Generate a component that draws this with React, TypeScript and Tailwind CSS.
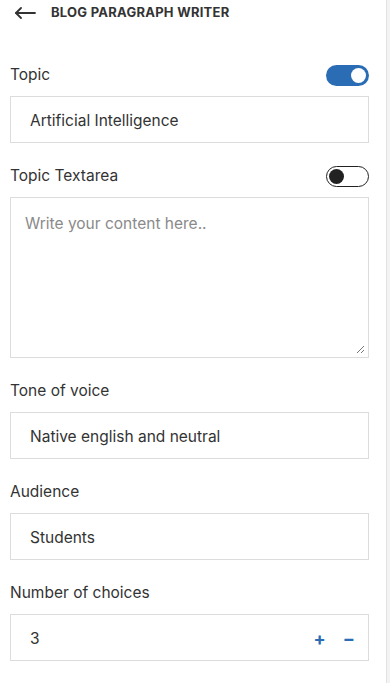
import React from "react";

function Toggle({ on }: { on: boolean }) {
  return on ? (
    <div className="w-[43px] h-[21px] rounded-full bg-[#2a6db5] flex items-center justify-end pr-[3px]">
      <div className="w-[15px] h-[15px] rounded-full bg-white" />
    </div>
  ) : (
    <div className="w-[43px] h-[21px] rounded-full bg-white border-[1.5px] border-[#222] flex items-center justify-start pl-[2px]">
      <div className="w-[15px] h-[15px] rounded-full bg-[#222]" />
    </div>
  );
}

function Label({ text, toggle }: { text: string; toggle?: boolean }) {
  return (
    <div className="flex items-center justify-between h-[22px] mb-[10px]">
      <span className="text-[15.5px] text-[#333]">{text}</span>
      {toggle !== undefined && <Toggle on={toggle} />}
    </div>
  );
}

function Field({ value }: { value: string }) {
  return (
    <div className="h-[47px] border border-[#dcdcdc] bg-white flex items-center px-[19px] pt-[2px] mb-[22px]">
      <span className="text-[15.5px] text-[#333]">{value}</span>
    </div>
  );
}

export default function App() {
  return (
    <div
      className="w-[390px] h-[683px] bg-white flex overflow-hidden"
      style={{ fontFamily: 'Inter, "Liberation Sans", Arial, sans-serif' }}
    >
      <div className="w-[386px] flex flex-col">
        <div className="h-[26px] flex items-center pl-[14px]">
          <svg width="22" height="12" viewBox="0 0 22 12" fill="none" stroke="#333" strokeWidth="1.8" strokeLinecap="round" strokeLinejoin="round">
            <path d="M21 6H2" />
            <path d="M7 1L2 6l5 5" />
          </svg>
          <span className="ml-[15px] text-[13px] font-bold text-[#333] tracking-[0.25px]">BLOG PARAGRAPH WRITER</span>
        </div>
        <div className="pt-[38px] pl-[10px] pr-[17px] flex flex-col">
          <Label text="Topic" toggle={true} />
          <Field value="Artificial Intelligence" />
          <Label text="Topic Textarea" toggle={false} />
          <div className="relative h-[161px] border border-[#dcdcdc] bg-white mb-[22px] px-[14px] pt-[13px]">
            <span className="text-[15.5px] text-[#8a8a8a]">Write your content here..</span>
            <svg className="absolute right-[3px] bottom-[3px]" width="9" height="9" viewBox="0 0 9 9" stroke="#777" strokeWidth="1">
              <path d="M8 1L1 8" />
              <path d="M8 5L5 8" />
            </svg>
          </div>
          <Label text="Tone of voice" />
          <Field value="Native english and neutral" />
          <Label text="Audience" />
          <Field value="Students" />
          <Label text="Number of choices" />
          <div className="h-[47px] border border-[#dcdcdc] bg-white flex items-center pl-[19px] pr-[13px] pt-[2px]">
            <span className="text-[15.5px] text-[#333] flex-1">3</span>
            <span className="text-[#2a6db5] text-[18px] font-bold leading-none mr-[17px]">+</span>
            <span className="text-[#2a6db5] text-[18px] font-bold leading-none">−</span>
          </div>
        </div>
      </div>
      <div className="w-[4px] h-full border-l border-[#e2e2e2] bg-[#f3f3f3]" />
    </div>
  );
}
